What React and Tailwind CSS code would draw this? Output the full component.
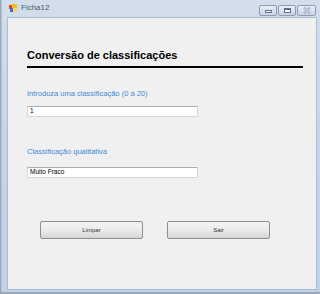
import React from 'react';

const font = { fontFamily: '"Liberation Sans", Arial, sans-serif' };

const CaptionButton = ({ children, wide }) => (
  <div
    className={`flex items-center justify-center h-[11px] ${wide ? 'w-[19px]' : 'w-[18px]'} rounded-[2px] border border-[#8c9db3] bg-gradient-to-b from-[#e9eff7] to-[#c8d5e6]`}
  >
    {children}
  </div>
);

const TextBox = ({ value }) => (
  <div className="w-[171px] h-[11px] bg-white border border-[#d5d9df] border-t-[#abadb3] flex items-center pl-[2px] text-[6.5px] text-black leading-none">
    {value}
  </div>
);

const Button = ({ label }) => (
  <div className="w-[103px] h-[18px] rounded-[2px] border border-[#8f8f8f] bg-gradient-to-b from-[#f4f4f4] via-[#ebebeb] to-[#d6d6d6] flex items-center justify-center text-[6px] text-[#333]">
    {label}
  </div>
);

export default function App() {
  return (
    <div className="w-[320px] h-[294px] bg-[#9aa8ba] overflow-hidden" style={font}>
      <div className="ml-[1px] w-[319px] h-[292px] flex flex-col bg-gradient-to-b from-[#d3deeb] via-[#c6d5e7] to-[#c0d2e8] border-l border-[#b4c3d6]">
        {/* title bar */}
        <div className="h-[16px] flex items-center pl-[7px] pr-[4px]">
          <svg width="8" height="8" viewBox="0 0 8 8" className="mr-[4px]">
            <rect x="0" y="1" width="4" height="4" fill="#e8402a" />
            <rect x="3" y="0" width="5" height="4" fill="#f3c019" />
            <rect x="1" y="4" width="4" height="4" fill="#3a6fd8" />
            <rect x="4" y="4" width="4" height="4" fill="#f7d66a" />
          </svg>
          <span className="text-[8px] text-[#4a5a6e] leading-none">Ficha12</span>
          <div className="ml-auto flex gap-[1px] mt-[4px]">
            <CaptionButton>
              <div className="w-[7px] h-[3px] border border-[#5f6f86] bg-white mt-[3px]" />
            </CaptionButton>
            <CaptionButton>
              <div className="w-[7px] h-[5px] border border-[#5f6f86] border-t-2 bg-white" />
            </CaptionButton>
            <CaptionButton wide>
              <svg width="8" height="7" viewBox="0 0 8 7">
                <path d="M1 0.5 L7 6.5 M7 0.5 L1 6.5" stroke="#8d9bb0" strokeWidth="2" fill="none" />
                <path d="M1 0.5 L7 6.5 M7 0.5 L1 6.5" stroke="#f4f7fb" strokeWidth="0.8" fill="none" />
              </svg>
            </CaptionButton>
          </div>
        </div>
        {/* client area */}
        <div className="ml-[5px] mr-[3px] mt-[1px] h-[273px] bg-[#f0f0f0] border border-[#a9bdd6] flex flex-col pl-[19px]">
          <h1 className="mt-[32px] text-[11px] font-bold text-black leading-none">Conversão de classificações</h1>
          <div className="mt-[5px] w-[276px] h-[2px] bg-black" />
          <p className="mt-[22px] text-[7.5px] text-[#3f8ad8] leading-none">Introduza uma classificação (0 a 20)</p>
          <div className="mt-[8px]">
            <TextBox value="1" />
          </div>
          <p className="mt-[31px] text-[7.5px] text-[#3f8ad8] leading-none">Classificação qualitativa</p>
          <div className="mt-[12px]">
            <TextBox value="Muito Fraco" />
          </div>
          <div className="mt-[43px] ml-[13px] flex gap-[24px]">
            <Button label="Limpar" />
            <Button label="Sair" />
          </div>
        </div>
      </div>
    </div>
  );
}
